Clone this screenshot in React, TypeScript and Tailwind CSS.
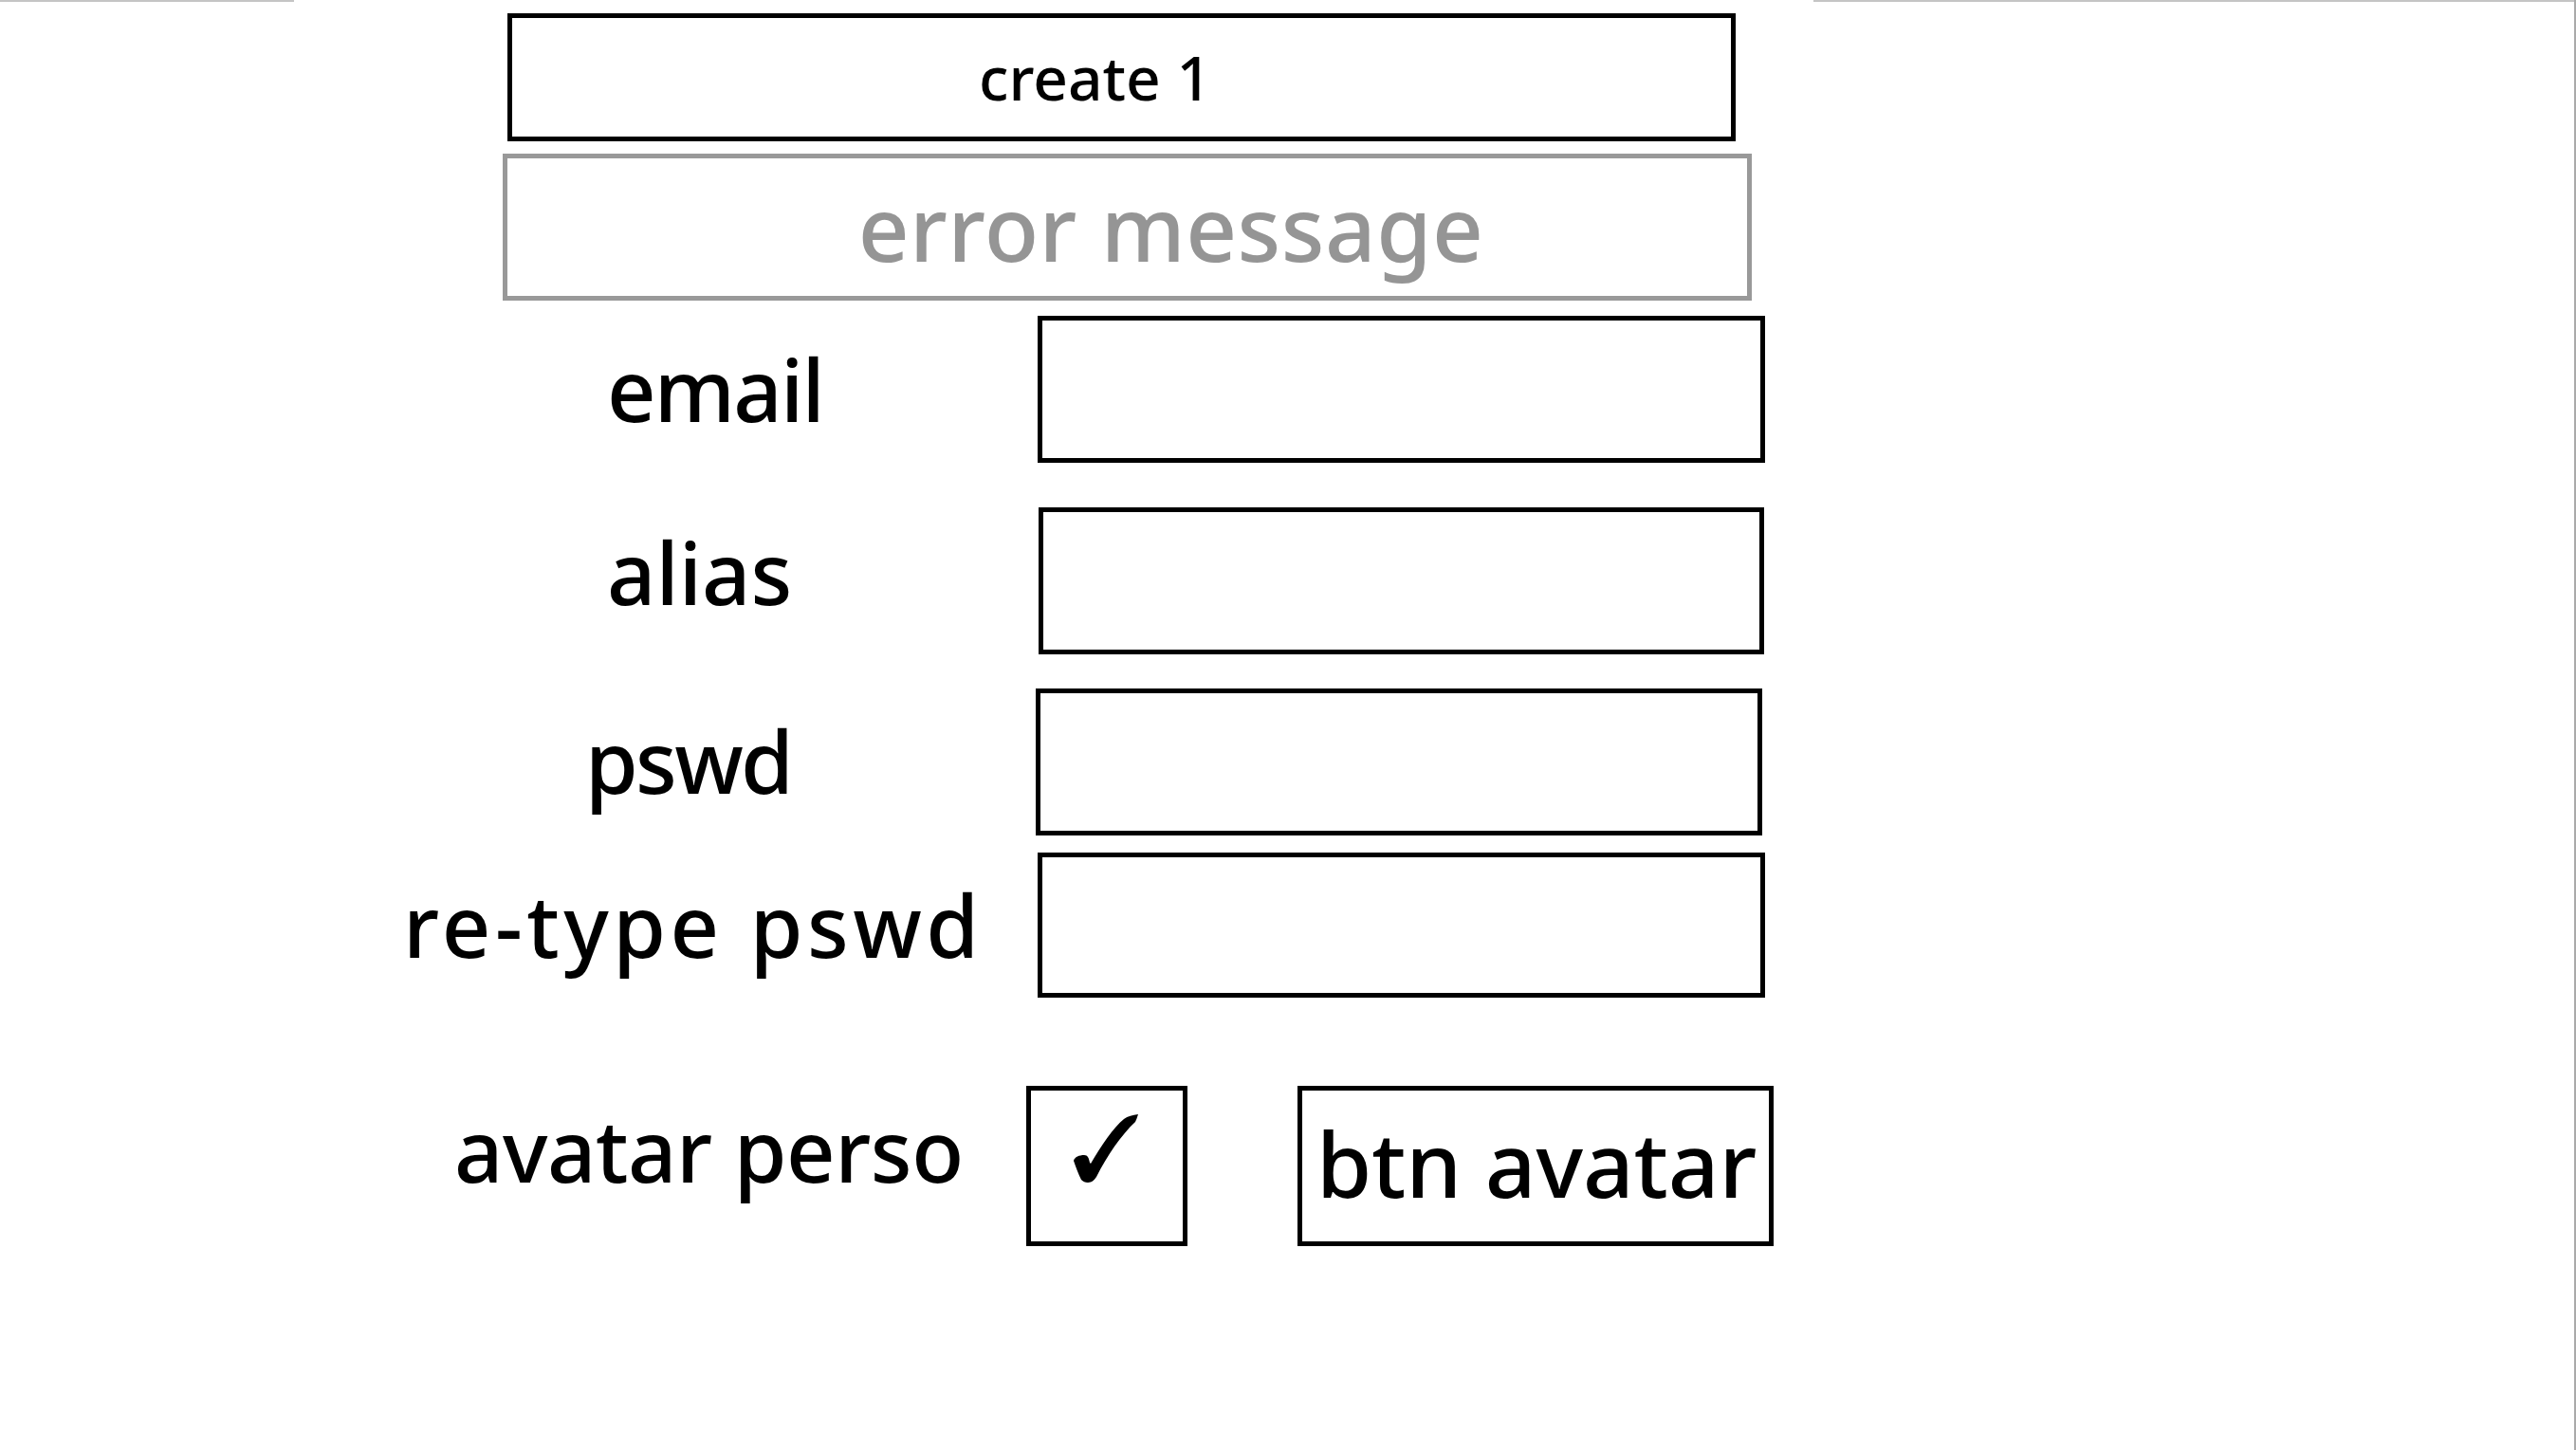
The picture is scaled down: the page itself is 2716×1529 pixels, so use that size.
const font = "font-['Noto_Sans',sans-serif] font-medium";

type Row = {
  label: string;
  rowClass: string;
  labelBox: string;
  labelText: string;
  input: string;
};

// wireframe rows: label column pushes the input to its x
const rows: Row[] = [
  { label: "email", rowClass: "mt-[16px]", labelBox: "w-[1094px]", labelText: "pl-[640px] pt-[32px] tracking-[-0.02em]", input: "w-[767px] h-[155px]" },
  { label: "alias", rowClass: "mt-[47px]", labelBox: "w-[1095px]", labelText: "pl-[640px] pt-[23px]", input: "w-[765px] h-[155px]" },
  { label: "pswd", rowClass: "mt-[36px]", labelBox: "w-[1092px]", labelText: "pl-[617px] pt-[31px] tracking-[-0.03em]", input: "w-[766px] h-[155px]" },
  { label: "re-type pswd", rowClass: "mt-[18px]", labelBox: "w-[1094px]", labelText: "pl-[425px] pt-[31px] tracking-[0.05em]", input: "w-[767px] h-[153px]" },
];

function Check() {
  return (
    <svg width="68" height="72" viewBox="0 0 68 72" className="block">
      <path
        d="M68 0 C62 1 57 2 53 5 C42 14 29 33 18 52 L17 51 C16 46 15 43 11 43 C6 43 1 45 0 49 C2 55 5 63 8 69 C10 71 12 72 15 72 C19 72 22 69 24 66 C35 44 50 22 65 8 C66 6 67 3 68 0 Z"
        fill="#000"
      />
    </svg>
  );
}

export default function App() {
  return (
    <div className={`${font} relative flex h-[1529px] w-full flex-col overflow-hidden border-r-2 border-[#aaaaaa] bg-white text-black`}>
      <div className="flex h-[2px] shrink-0">
        <div className="w-[310px] bg-[#c4c4c4]" />
        <div className="flex-1" />
        <div className="w-[802px] bg-[#c4c4c4]" />
      </div>

      <div className="ml-[535px] mt-[12px] flex h-[135px] w-[1295px] items-center justify-center border-[5px] border-black pr-[56px] text-[64px] leading-none">
        create 1
      </div>

      <div className="ml-[530px] mt-[13px] flex h-[155px] w-[1317px] items-center justify-center border-[5px] border-[#999999] pl-[92px] text-[94px] leading-none tracking-[0.005em] text-[#959595]">
        error message
      </div>

      {rows.map((r) => (
        <div key={r.label} className={`flex ${r.rowClass}`}>
          <div className={`shrink-0 ${r.labelBox}`}>
            <div className={`whitespace-nowrap text-[90px] leading-none ${r.labelText}`}>{r.label}</div>
          </div>
          <div className={`shrink-0 border-[5px] border-black ${r.input}`} />
        </div>
      ))}

      <div className="mt-[93px] flex">
        <div className="w-[1082px] shrink-0">
          <div className="whitespace-nowrap pl-[479px] pt-[22px] text-[90px] leading-none tracking-[-0.005em]">avatar perso</div>
        </div>
        <div className="h-[169px] w-[170px] shrink-0 border-[5px] border-black pl-[45px] pt-[25px]">
          <Check />
        </div>
        <div className="ml-[116px] h-[169px] w-[502px] shrink-0 border-[5px] border-black pl-[15px] pt-[30px]">
          <div className="whitespace-nowrap text-[94px] leading-none">btn avatar</div>
        </div>
      </div>
    </div>
  );
}
